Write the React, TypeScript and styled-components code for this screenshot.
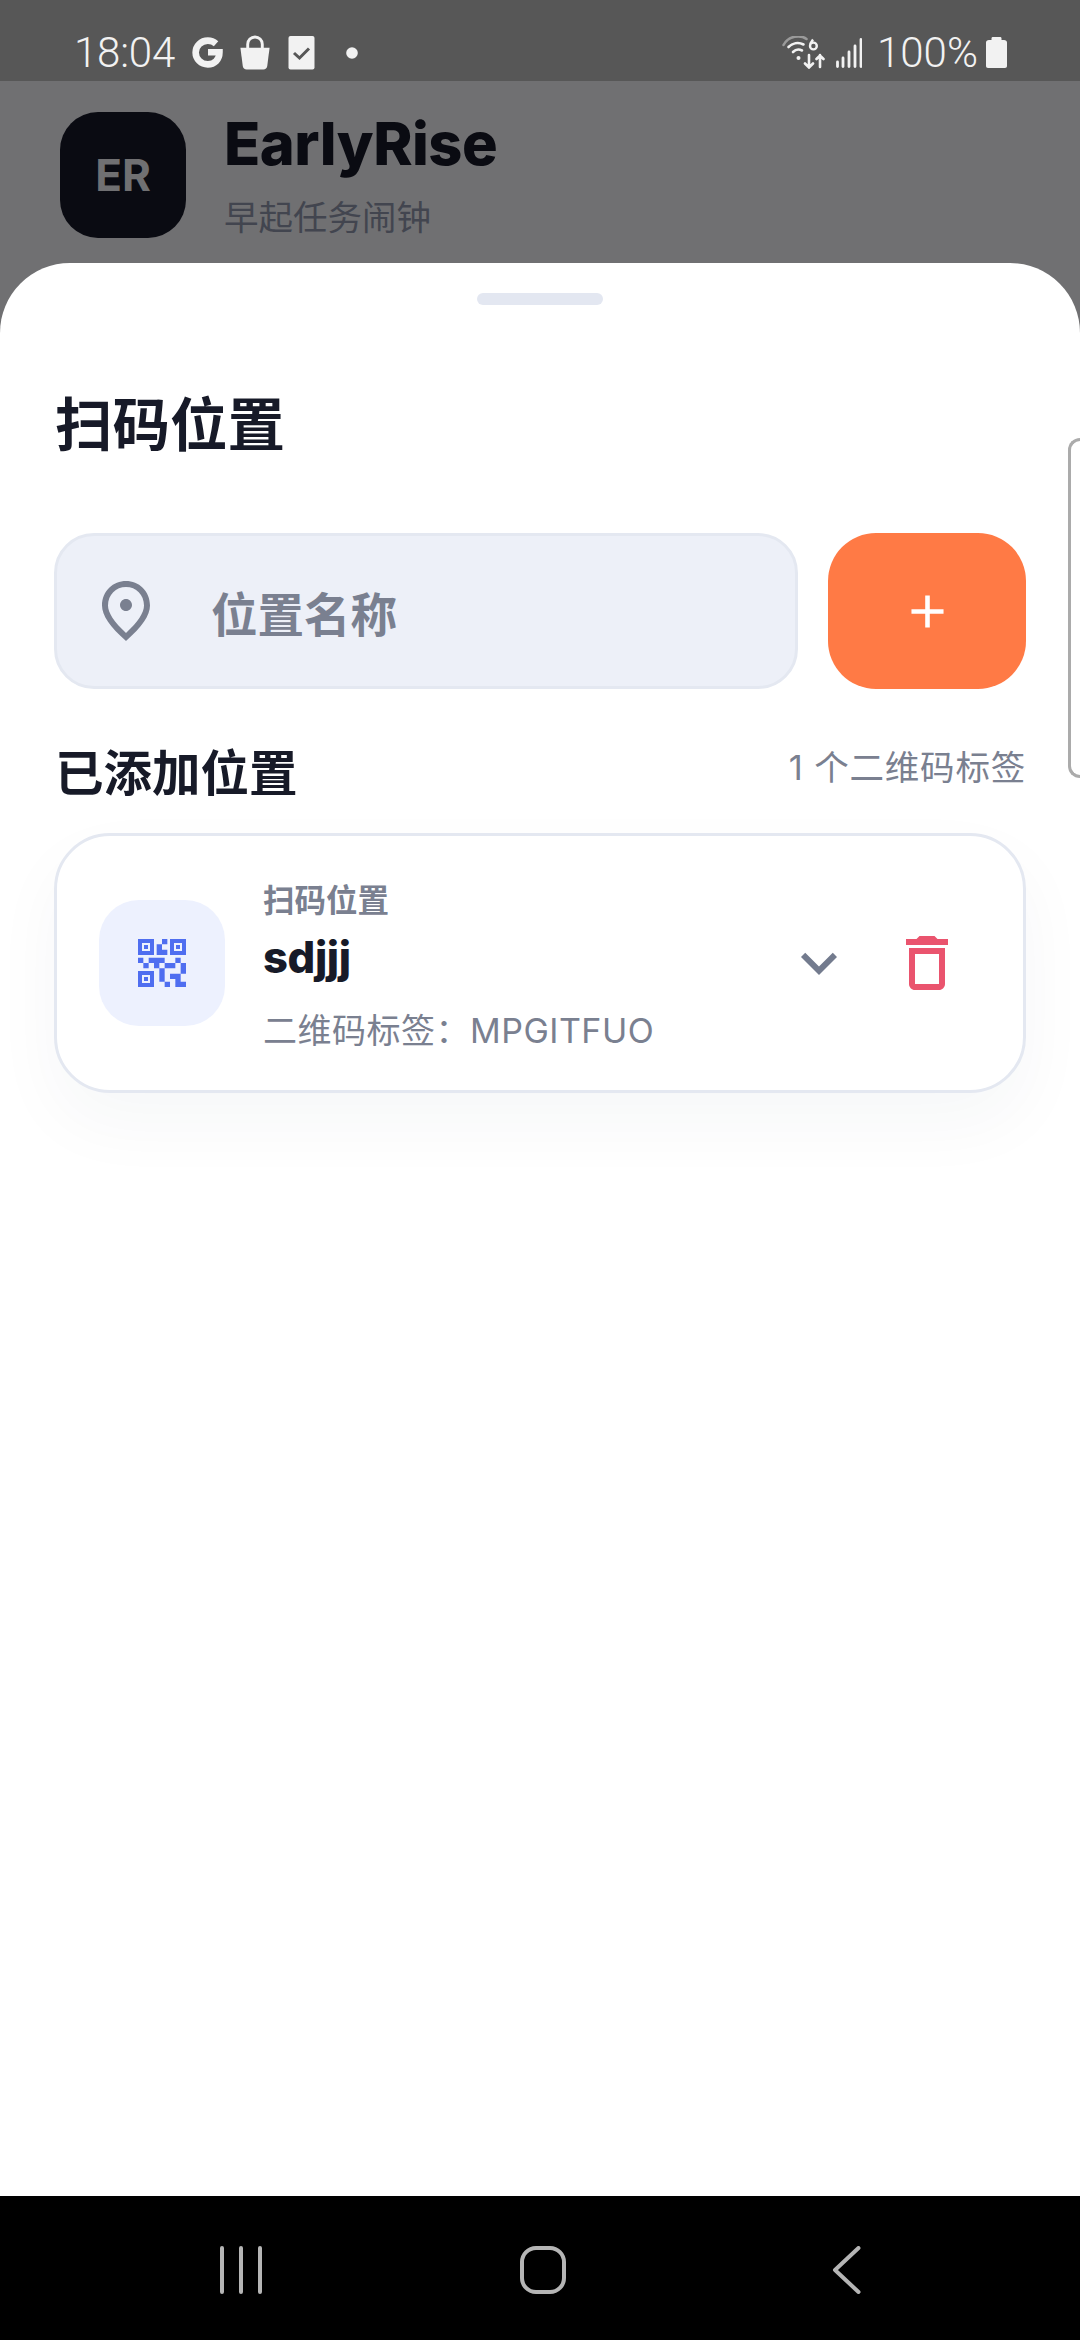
import React from 'react';
import styled, { createGlobalStyle } from 'styled-components';
import { MdOutlinePlace, MdExpandMore, MdDeleteOutline, MdQrCode2, MdAdd } from 'react-icons/md';

const Global = createGlobalStyle`
  html, body { margin: 0; padding: 0; background: #000; }
  * { box-sizing: border-box; }
`;

const sans = `Inter, "Noto Sans CJK SC", sans-serif`;

const Screen = styled.div`
  width: 1080px; height: 2340px; display: flex; flex-direction: column;
  background: #707072; font-family: ${sans}; overflow: hidden;
`;
const StatusBar = styled.div`
  height: 81px; flex: none; background: #575757; color: #f2f2f2;
  display: flex; align-items: flex-start; justify-content: space-between;
  padding: 29px 73px 0 74px; font-family: Roboto, sans-serif; font-weight: 300; font-size: 42px; line-height: 47px;
`;
const StatusGroup = styled.div`
  display: flex; align-items: center; height: 47px;
`;
const Time = styled.span`
  width: 100px; margin-right: 17px; letter-spacing: -0.2px; white-space: nowrap;
`;
const Percent = styled.span`
  width: 102px; margin-right: 7px; margin-left: -1px; white-space: nowrap;
`;
const StatusIcon = styled.svg<{ $gap?: number }>`
  display: block; flex: none; margin-right: ${p => p.$gap ?? 0}px;
`;
const AppHeader = styled.header`
  height: 182px; flex: none; display: flex; align-items: flex-start; padding: 31px 0 0 60px;
`;
const Logo = styled.div`
  width: 126px; height: 126px; border-radius: 38px; background: #0a0b12; color: #707072;
  display: flex; align-items: center; justify-content: center; font-size: 44px; font-weight: 700;
`;
const Brand = styled.div`
  margin-left: 38px; display: flex; flex-direction: column;
`;
const BrandName = styled.div`
  font-size: 59.5px; font-weight: 800; line-height: 70px; color: #0a0b12; letter-spacing: -0.5px; margin-top: -4px;
`;
const BrandSub = styled.div`
  font-size: 34.5px; line-height: 44px; margin-top: 18px; color: #42454f;
`;
const Sheet = styled.main`
  position: relative; flex: 1; background: #fff; border-radius: 70px 70px 0 0; padding: 30px 54px 0;
  display: flex; flex-direction: column;
`;
const Handle = styled.div`
  align-self: center; width: 126px; height: 12px; border-radius: 6px; background: #e3e7f1;
`;
const Title = styled.h1`
  margin: 82px 0 0 1px; font-size: 57.5px; line-height: 76px; font-weight: 700; color: #171a28;
`;
const EdgeTab = styled.div`
  position: absolute; right: 0; top: 175px; width: 12px; height: 340px;
  border: 3px solid #ababab; border-right: none; border-radius: 16px 0 0 16px;
`;
const AddRow = styled.div`
  display: flex; gap: 30px; margin-top: 70px;
`;
const Field = styled.div`
  width: 744px; height: 156px; background: #edf0f8; border: 3px solid #e4e8f1; border-radius: 40px;
  display: flex; align-items: center; padding-left: 33px; color: #7a8090;
`;
const FieldText = styled.span`
  margin-left: 49px; font-size: 46.5px; font-weight: 700;
`;
const AddButton = styled.button`
  width: 198px; height: 156px; border: none; border-radius: 48px; background: #ff7a45; color: #fff;
  padding: 0; display: flex; align-items: center; justify-content: center;
`;
const SectionRow = styled.div`
  display: flex; align-items: center; justify-content: space-between; margin-top: 50px; height: 62px;
  margin-left: 1px;
`;
const SectionTitle = styled.h2`
  margin: 0; font-size: 48.5px; font-weight: 700; color: #171a28;
`;
const SectionCount = styled.span`
  font-size: 34.5px; line-height: 58px; height: 62px; color: #7a8090; letter-spacing: 0.8px;
`;
const Card = styled.section`
  margin-top: 32px; height: 260px; background: #fff; border: 3px solid #e4e8f1; border-radius: 56px;
  display: flex; align-items: center; padding: 0 60px 0 42px;
  box-shadow: 0 30px 70px rgba(30, 40, 70, 0.04);
`;
const QrTile = styled.div`
  width: 126px; height: 126px; flex: none; border-radius: 40px; background: #edf1fe; color: #4f6ef0;
  display: flex; align-items: center; justify-content: center;
`;
const Info = styled.div`
  margin-left: 38px; flex: 1; display: flex; flex-direction: column; padding-top: 8px;
`;
const InfoKicker = styled.div`
  font-size: 31.5px; line-height: 40px; font-weight: 700; color: #7a8090;
`;
const InfoName = styled.div`
  font-size: 43.5px; line-height: 56px; font-weight: 800; color: #171a28; margin-top: 8px; letter-spacing: -0.4px;
`;
const InfoTag = styled.div`
  font-size: 34px; line-height: 46px; color: #7a8090; margin-top: 23px; letter-spacing: 0.5px;
`;
const CardActions = styled.div`
  display: flex; align-items: center; gap: 36px;
`;
const ActionIcon = styled.span<{ $color: string }>`
  display: flex; color: ${p => p.$color};
`;
const NavBar = styled.nav`
  height: 144px; flex: none; background: #000; display: flex; align-items: flex-start; gap: 242px;
  padding: 50px 0 0 211px;
`;

export default function App() {
  return (
    <Screen>
      <Global />
      <StatusBar>
        <StatusGroup>
          <Time>18:04</Time>
          <StatusIcon $gap={15} width="33" height="33" viewBox="0 0 32 32" aria-label="Google">
            <path fill="none" stroke="#f2f2f2" strokeWidth="6.4" d="M16.5 15.8H27.6C27.6 23 22.8 27.5 16.3 27.5 9.8 27.5 4.5 22.4 4.5 16S9.8 4.5 16.3 4.5c3.2 0 5.9 1.1 8 3" />
          </StatusIcon>
          <StatusIcon $gap={17} width="32" height="35" viewBox="0 0 32 36" aria-label="Bag">
            <path fill="#f2f2f2" d="M1 13h30l-2.4 19c-.3 2.2-1.8 3.5-4 3.5H7.4c-2.2 0-3.7-1.3-4-3.5z" />
            <path fill="none" stroke="#f2f2f2" strokeWidth="3" d="M8.5 15V9.5a7.5 7.5 0 0 1 15 0V15" />
          </StatusIcon>
          <StatusIcon $gap={31} width="27" height="34" viewBox="0 0 26 34" aria-label="Tasks">
            <rect x="0" y="0" width="26" height="33.5" rx="2" fill="#f2f2f2" />
            <path fill="none" stroke="#575757" strokeWidth="3" d="M5.5 17l5.5 5 9.5-9.5" />
          </StatusIcon>
          <StatusIcon width="12" height="12" viewBox="0 0 12 12" aria-label="Notification">
            <circle cx="6" cy="6" r="5.8" fill="#f2f2f2" />
          </StatusIcon>
        </StatusGroup>
        <StatusGroup>
          <StatusIcon $gap={10} width="44" height="33" viewBox="0 0 43 33" aria-label="Wifi">
            <path fill="none" stroke="#9a9a9a" strokeWidth="2.6" strokeLinecap="round" d="M1 9C6-.5 18-1.5 24 3" />
            <path fill="none" stroke="#f2f2f2" strokeWidth="2.6" strokeLinecap="round" d="M6 11c4-4 10-5 15-2.5M10.5 16c2.5-2.5 6-3 9-1.5" />
            <circle cx="16" cy="22" r="2" fill="#f2f2f2" />
            <path fill="none" stroke="#f2f2f2" strokeWidth="2.4" d="M30.5 3.5C28.5 6 27.5 8 27.5 10a3.4 3.4 0 1 0 6.8 0 3.4 3.4 0 1 0-6.8 0" />
            <path fill="none" stroke="#f2f2f2" strokeWidth="2.6" strokeLinecap="round" d="M26.5 19v12M22.5 27.5l4 4 4-4M37.5 31V19M34 23l3.5-3.5 3.5 3.5" />
          </StatusIcon>
          <StatusIcon $gap={16} width="26" height="30" viewBox="0 0 26 30" aria-label="Signal">
            <path fill="none" stroke="#f2f2f2" strokeWidth="2.8" strokeLinecap="round" d="M1.5 24v4.5M7 20v8.5M13 14v14.5M19 8v20.5M25 1.500v27" />
          </StatusIcon>
          <Percent>100%</Percent>
          <StatusIcon width="21" height="31" viewBox="0 0 21 31" aria-label="Battery">
            <path fill="#f2f2f2" d="M7 0h7c1 0 1.5.5 1.5 1.5V3h2.500C19.800 3 21 4 21 5.500V29c0 1.200-.8 2-2 2H2c-1.200 0-2-.8-2-2V5.500C0 4 1.200 3 3 3h2.500V1.500C5.500.5 6 0 7 0z" />
          </StatusIcon>
        </StatusGroup>
      </StatusBar>

      <AppHeader>
        <Logo>ER</Logo>
        <Brand>
          <BrandName>EarlyRise</BrandName>
          <BrandSub>早起任务闹钟</BrandSub>
        </Brand>
      </AppHeader>

      <Sheet>
        <Handle />
        <EdgeTab />
        <Title>扫码位置</Title>
        <AddRow>
          <Field>
            <MdOutlinePlace size={72} />
            <FieldText>位置名称</FieldText>
          </Field>
          <AddButton aria-label="添加">
            <MdAdd size={55} />
          </AddButton>
        </AddRow>
        <SectionRow>
          <SectionTitle>已添加位置</SectionTitle>
          <SectionCount>1 个二维码标签</SectionCount>
        </SectionRow>
        <Card>
          <QrTile><MdQrCode2 size={64} /></QrTile>
          <Info>
            <InfoKicker>扫码位置</InfoKicker>
            <InfoName>sdjjj</InfoName>
            <InfoTag>二维码标签：MPGITFUO</InfoTag>
          </Info>
          <CardActions>
            <ActionIcon $color="#737b8e"><MdExpandMore size={72} /></ActionIcon>
            <ActionIcon $color="#ea546e"><MdDeleteOutline size={72} /></ActionIcon>
          </CardActions>
        </Card>
      </Sheet>

      <NavBar>
        <svg width="60" height="48" viewBox="0 0 60 48" aria-label="Recent">
          <path fill="none" stroke="#b5b5b5" strokeWidth="4" strokeLinecap="round" d="M11 2v44M30 2v44M49 2v44" />
        </svg>
        <svg width="60" height="48" viewBox="0 0 60 48" aria-label="Home">
          <rect x="9" y="2" width="42" height="44" rx="14" fill="none" stroke="#b5b5b5" strokeWidth="4" />
        </svg>
        <svg width="60" height="48" viewBox="0 0 60 48" aria-label="Back">
          <path fill="none" stroke="#b5b5b5" strokeWidth="4" strokeLinecap="round" strokeLinejoin="round" d="M43.5 2L20 24l23.5 22" />
        </svg>
      </NavBar>
    </Screen>
  );
}
